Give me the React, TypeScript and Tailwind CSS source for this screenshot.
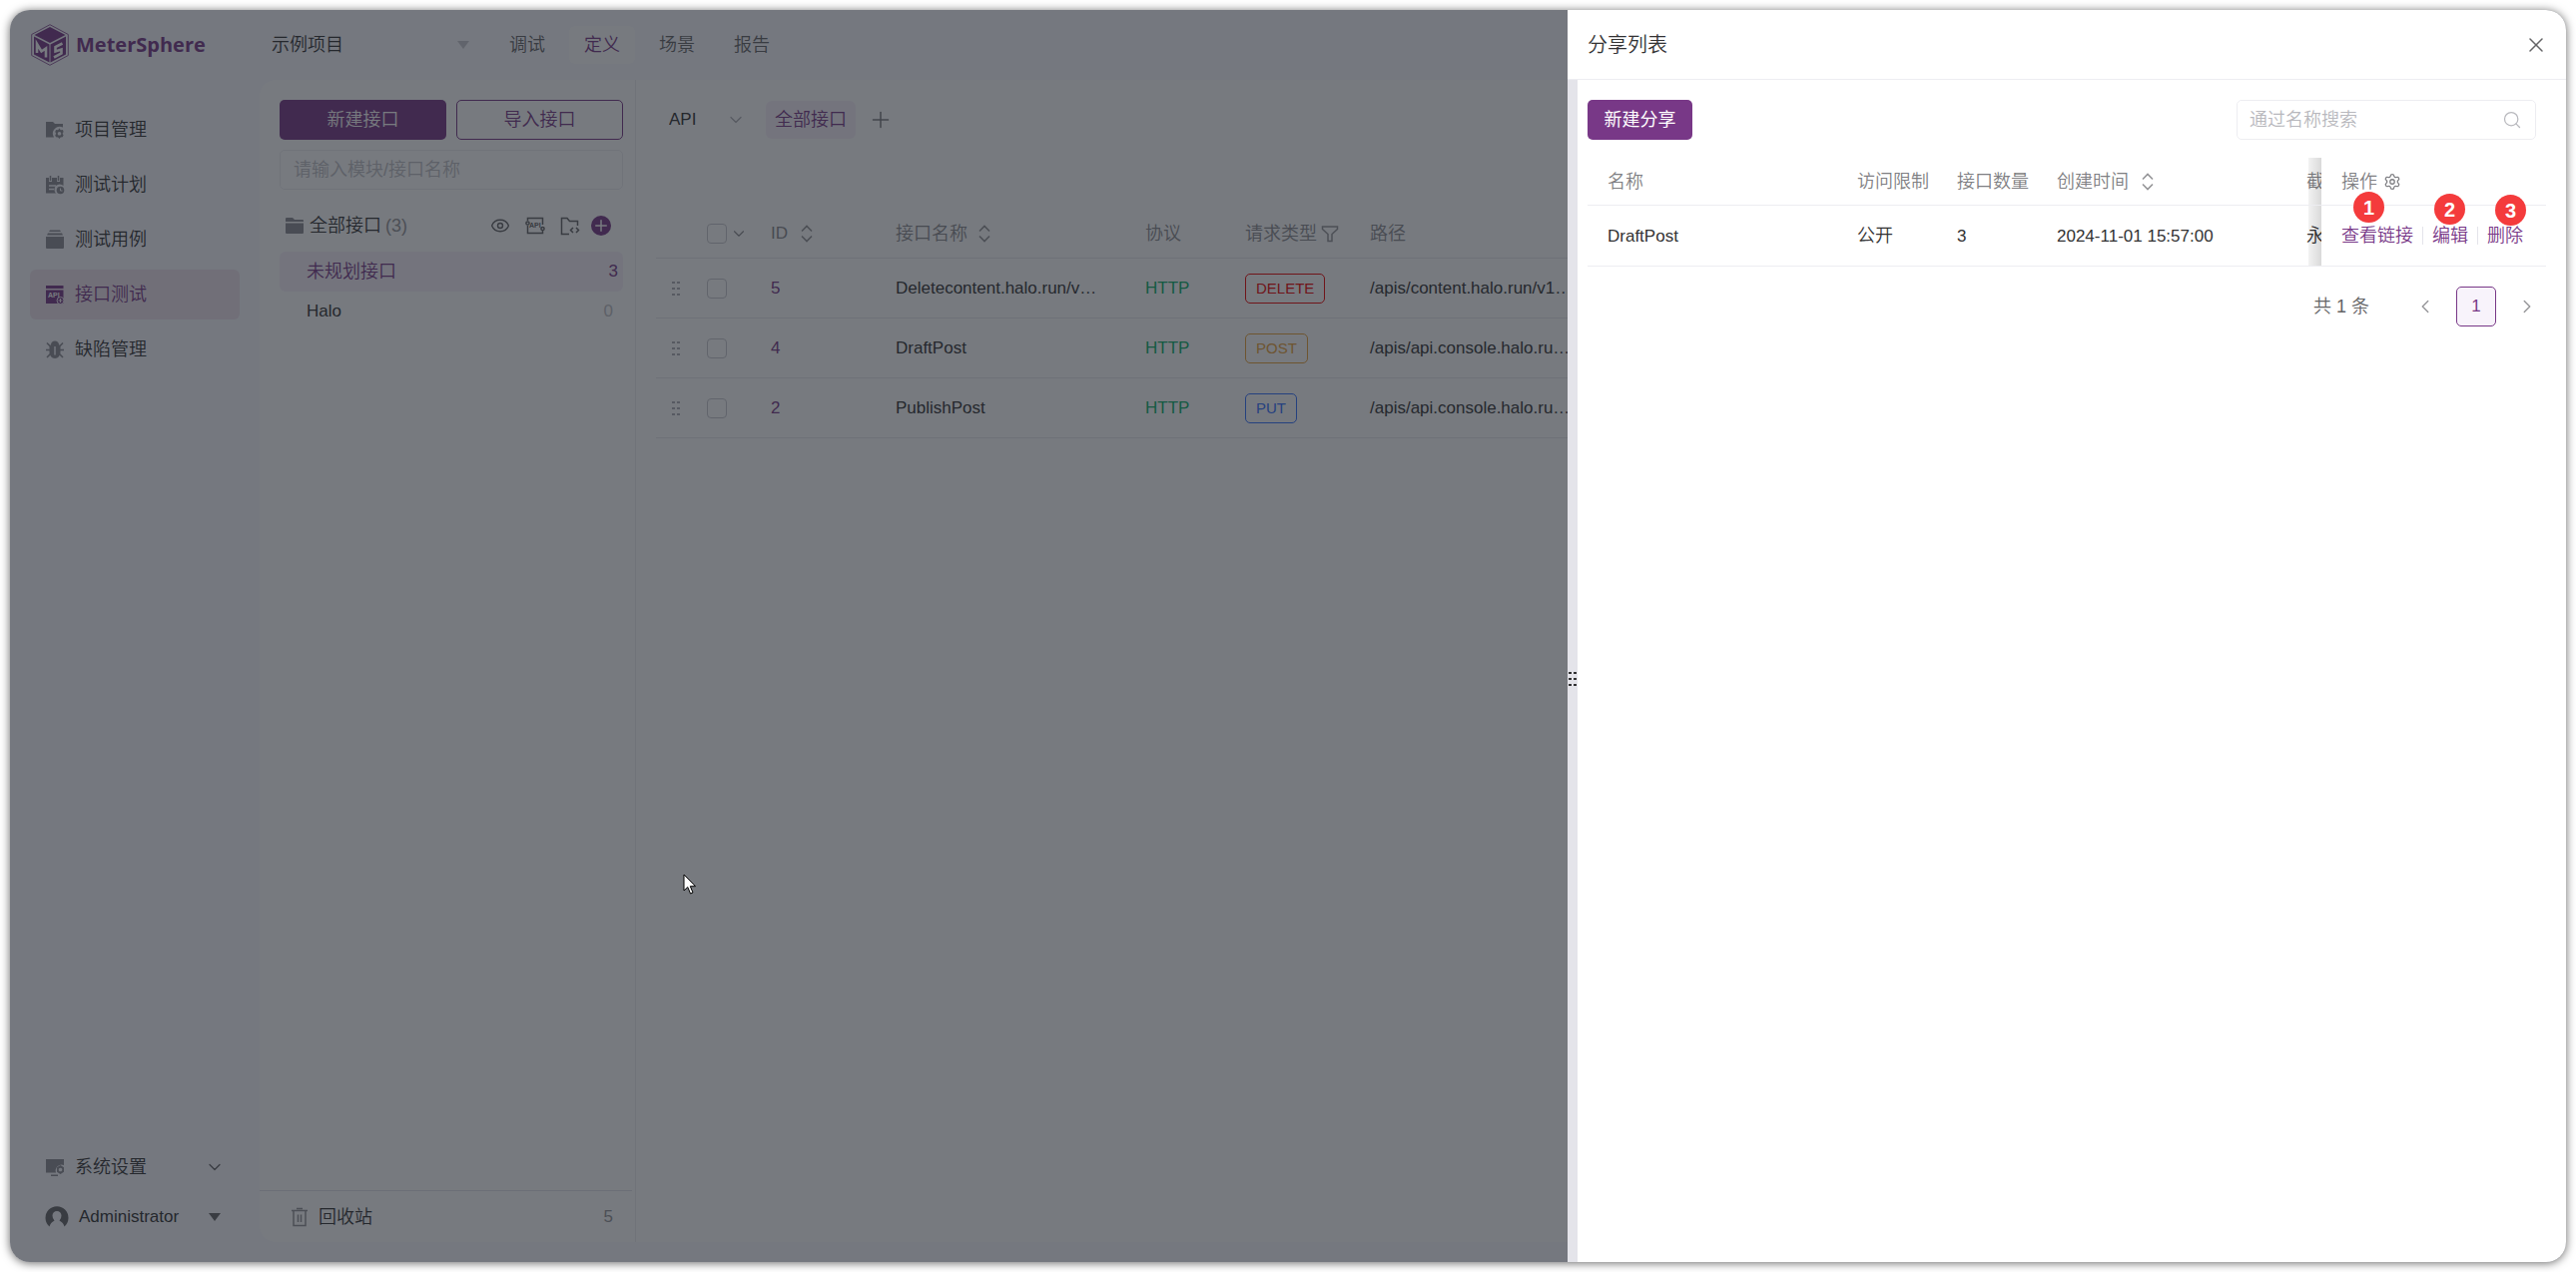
import React from 'react';
import { ChevronDown, ChevronLeft, ChevronRight, Eye, Plus, Search, Settings, X } from 'lucide-react';

type IconProps = { className?: string };

const MeterLogo = () => (
  <svg width="38" height="42" viewBox="0 0 38 42" aria-hidden="true">
    <path d="M19 .7 L37.300 10.500 V31.500 L19 41.300 L.7 31.500 V10.500 Z" fill="none" stroke="#783887" strokeWidth=".8" />
    <path d="M19 3 L34.500 11 L19 19 L3.500 11 Z" fill="#783887" />
    <path d="M3 12.500 L18.500 20.500 V38.500 L3 30.500 Z" fill="#783887" />
    <path d="M35 12.500 L19.500 20.500 V38.500 L35 30.500 Z" fill="#783887" />
    <path d="M6 29 V20 L10.500 27.500 L15 24.500 V33.500" fill="none" stroke="#fff" strokeWidth="2.600" />
    <path d="M31.500 19.500 L24.500 23 V27.500 L30.500 25.500 V29.500 L23 33.500" fill="none" stroke="#fff" strokeWidth="2.600" />
  </svg>
);

const ProjectIcon = ({ className }: IconProps) => (
  <svg className={className} width="20" height="20" viewBox="0 0 20 20" fill="currentColor" aria-hidden="true">
    <path d="M1 2 H8 L10 4 H18 V7.500 A7 7 0 0 0 9 17.500 H1 Z" />
    <path fillRule="evenodd" d="M14.500 8.500 l1.300 1.700 2.100-.1.700 2-1 1.600 1 1.800-.9 1.800-2 .1-1.200 1.600-1.400-1.600-2-.1-.9-1.800 1-1.800-1-1.600.9-2 2 .1Z M14.500 12 a1.800 1.800 0 1 0 .01 0Z" />
  </svg>
);

const PlanIcon = ({ className }: IconProps) => (
  <svg className={className} width="20" height="20" viewBox="0 0 20 20" aria-hidden="true">
    <path d="M1 3 H4 V7 H7 V3 H12 V7 H15 V3 H18.500 V11 A5 5 0 0 0 11 18.500 H1 Z" fill="currentColor" />
    <path d="M5.500 1 V6 M13.500 1 V6" stroke="currentColor" strokeWidth="1.500" />
    <path d="M4 11 H11 M4 14.500 H9" stroke="#f9f9fe" strokeWidth="1.500" />
    <circle cx="15.500" cy="15.500" r="3.800" fill="currentColor" />
    <path d="M15.500 13.500 V16 H17.500" stroke="#f9f9fe" fill="none" />
  </svg>
);

const CaseIcon = ({ className }: IconProps) => (
  <svg className={className} width="20" height="20" viewBox="0 0 20 20" fill="currentColor" aria-hidden="true">
    <path d="M5 .5 H15 L16 2 H4 Z M3 3.500 H17 L18 5.500 H2 Z M1 7 H19 V18 Q19 19 18 19 H2 Q1 19 1 18 Z" />
  </svg>
);

const ApiTestIcon = ({ className }: IconProps) => (
  <svg className={className} width="20" height="20" viewBox="0 0 20 20" aria-hidden="true">
    <path d="M1 1 H18.500 V4 H1 Z M1 5.500 H18.500 V19 H1 Z" fill="currentColor" />
    <text x="3" y="13" fontSize="7" fontWeight="bold" fontFamily="Liberation Sans, sans-serif" fill="#fff">API</text>
    <circle cx="15.500" cy="16" r="3.500" fill="currentColor" stroke="#f4edf6" />
    <path d="M15.500 14 V18 M13.500 16 H17.500" stroke="#f4edf6" />
  </svg>
);

const BugIcon = ({ className }: IconProps) => (
  <svg className={className} width="20" height="20" viewBox="0 0 20 20" fill="none" stroke="currentColor" aria-hidden="true">
    <path d="M1 10.500 H19 M2 3.500 L5.500 7 M18 3.500 L14.500 7 M2 18 L5.500 14.500 M18 18 L14.500 14.500" strokeWidth="1.600" />
    <path d="M6 5 Q6.500 1.500 10 1.500 Q13.500 1.500 14 5 L15.500 7 V13 Q15 18.500 10 19 Q5 18.500 4.500 13 V7 Z" fill="currentColor" stroke="none" />
    <path d="M10 7 V15.500" stroke="#f9f9fe" strokeWidth="1.500" />
  </svg>
);

const SystemIcon = ({ className }: IconProps) => (
  <svg className={className} width="20" height="20" viewBox="0 0 20 20" fill="currentColor" aria-hidden="true">
    <path d="M1 2 H19 V8 A6 6 0 0 0 11 15.500 H1 Z M6 17.500 H13 V19 H6 Z" />
    <path fillRule="evenodd" d="M15.500 8 l3.500 2.200 v4.500 l-3.500 2.300 -3.500-2.300 v-4.500 Z M15.500 10.700 a1.800 1.800 0 1 0 .01 0Z" />
  </svg>
);

const AvatarIcon = ({ className }: IconProps) => (
  <svg className={className} width="24" height="24" viewBox="0 0 24 24" aria-hidden="true">
    <path fillRule="evenodd" fill="currentColor" d="M4.500 21.500 A11.500 11.500 0 1 1 19.500 21.500 Q18.500 17.500 14.500 15.500 Q16.500 13.500 16.500 10.500 A4.500 4.500 0 0 0 7.500 10.500 Q7.500 13.500 9.500 15.500 Q5.500 17.500 4.500 21.500 Z" />
  </svg>
);

const FolderIcon = ({ className }: IconProps) => (
  <svg className={className} width="20" height="18" viewBox="0 0 20 18" fill="currentColor" aria-hidden="true">
    <path d="M1 2 Q1 1 2 1 H8 L10 3 H18 Q19 3 19 4 V5 H1 Z M1 6.500 H19 V16 Q19 17 18 17 H2 Q1 17 1 16 Z" />
  </svg>
);

const ApiIcon = () => (
  <svg width="20" height="18" viewBox="0 0 20 18" fill="none" stroke="#646466" strokeWidth="1.500" aria-hidden="true">
    <path d="M2.500 4 V1.500 H17.500 V8 M2.500 9 V16.500 H17.500 V14" />
    <circle cx="2.500" cy="6.500" r="1.600" />
    <circle cx="17.500" cy="12" r="1.600" />
    <text x="4" y="11" fontSize="7" fontWeight="bold" fontFamily="Liberation Sans, sans-serif" fill="#646466" stroke="none">API</text>
  </svg>
);

const FolderCodeIcon = () => (
  <svg width="20" height="19" viewBox="0 0 20 19" fill="none" stroke="#646466" strokeWidth="1.500" aria-hidden="true">
    <path d="M9 17.500 H1.500 V1.500 H7 L9.500 4.500 H17.500 V9" />
    <path d="M13 11 L10.500 13.500 L13 16 M16 11 L18.500 13.500 L16 16" />
  </svg>
);

const TrashIcon = () => (
  <svg width="18" height="20" viewBox="0 0 18 20" fill="none" stroke="#959598" strokeWidth="1.500" aria-hidden="true">
    <path d="M1 3.500 H17 M6 1.500 H12 M3 4 V18.500 H15 V4 M7.500 7.500 V15 M10.500 7.500 V15" />
  </svg>
);

const FilterIcon = () => (
  <svg width="18" height="18" viewBox="0 0 18 18" fill="none" stroke="#959598" strokeWidth="1.500" aria-hidden="true">
    <path d="M1.500 2 H16.500 V4.500 L11 9.500 V16.500 H7 V9.500 L1.500 4.500 Z" />
  </svg>
);

const SortIcon = () => (
  <svg width="14" height="18" viewBox="0 0 14 18" fill="none" stroke="#959598" strokeWidth="1.600" aria-hidden="true">
    <path d="M2 6.500 L7 1.500 L12 6.500 M2 11.500 L7 16.500 L12 11.500" />
  </svg>
);

const DragDots = ({ className }: IconProps) => (
  <svg className={className} width="10" height="16" viewBox="0 0 10 16" fill="currentColor" aria-hidden="true">
    <path d="M1 1h3v2H1z M6 1h3v2H6z M1 7h3v2H1z M6 7h3v2H6z M1 13h3v2H1z M6 13h3v2H6z" />
  </svg>
);

const Caret = ({ className }: IconProps) => (
  <svg className={className} width="12" height="8" viewBox="0 0 12 8" fill="currentColor" aria-hidden="true">
    <path d="M0 0 H12 L6 8 Z" />
  </svg>
);

const navItems = [
  { label: '项目管理', icon: ProjectIcon },
  { label: '测试计划', icon: PlanIcon },
  { label: '测试用例', icon: CaseIcon },
  { label: '接口测试', icon: ApiTestIcon, active: true },
  { label: '缺陷管理', icon: BugIcon },
];

const topTabs = ['调试', '定义', '场景', '报告'];

const apis = [
  { id: '5', name: 'Deletecontent.halo.run/v…', method: 'DELETE', color: 'border-[#ed0303] text-[#ed0303]', path: '/apis/content.halo.run/v1…' },
  { id: '4', name: 'DraftPost', method: 'POST', color: 'border-[#e9a23b] text-[#e9a23b]', path: '/apis/api.console.halo.ru…' },
  { id: '2', name: 'PublishPost', method: 'PUT', color: 'border-[#3370ff] text-[#3370ff]', path: '/apis/api.console.halo.ru…' },
];

const actions = [
  { label: '查看链接', step: 1, place: 'left-[12px] -top-[32px]' },
  { label: '编辑', step: 2, place: 'left-[2px] -top-[30px]' },
  { label: '删除', step: 3, place: 'left-[8px] -top-[29px]' },
];

const checkbox = 'block size-5 shrink-0 appearance-none rounded-sm border border-[#c9c9d0] bg-white';

// Edge shadow that the fixed column casts on the cells to its left
const FixedShadow = () => (
  <div className="absolute inset-y-0 -left-[13px] w-[13px] bg-linear-to-r from-black/5 to-black/15" />
);

function TopBar() {
  return (
    <header className="flex h-[70px] shrink-0 items-center">
      <div className="flex w-[250px] items-center gap-[7px] pl-[21px]">
        <MeterLogo />
        <span className="font-['Open_Sans',sans-serif] text-xl font-bold text-[#783887]">MeterSphere</span>
      </div>
      <label className="flex w-[210px] items-center justify-between pl-3">
        <select aria-label="项目" className="appearance-none bg-transparent text-[#323233]">
          <option>示例项目</option>
        </select>
        <Caret className="text-[#c9c9d0]" />
      </label>
      <nav className="ml-[25px] flex gap-[9px]">
        {topTabs.map((tab) => (
          <a
            key={tab}
            href="#"
            className={`flex h-[38px] items-center rounded-md px-[15px] ${tab === '定义' ? 'bg-white text-[#783887]' : 'text-[#646466]'}`}
          >
            {tab}
          </a>
        ))}
      </nav>
    </header>
  );
}

function Sidebar() {
  return (
    <aside className="flex w-[250px] shrink-0 flex-col justify-between px-5 pt-[25px] text-[#323233]">
      <nav className="flex flex-col gap-[5px]">
        {navItems.map((item) => (
          <a
            key={item.label}
            href="#"
            className={`flex h-[50px] items-center gap-[10px] rounded-md px-[15px] ${item.active ? 'bg-[#f0e3ee] text-[#783887]' : ''}`}
          >
            <item.icon className={item.active ? 'text-[#783887]' : 'text-[#8d8d94]'} />
            {item.label}
          </a>
        ))}
      </nav>
      <div>
        <button className="flex h-[50px] w-full items-center gap-[10px] px-[15px]">
          <SystemIcon className="text-[#8d8d94]" />
          系统设置
          <ChevronDown size={20} strokeWidth={1.5} className="ml-auto text-[#646466]" />
        </button>
        <button className="flex h-[50px] w-full items-center gap-[10px] px-[15px] text-[17px]">
          <AvatarIcon className="text-[#646466]" />
          Administrator
          <Caret className="mr-1 ml-auto text-[#646466]" />
        </button>
      </div>
    </aside>
  );
}

function ModuleTree() {
  return (
    <section className="flex w-[377px] shrink-0 flex-col border-r border-[#ededf1]">
      <div className="flex-1 px-5 pt-5 pr-3">
        <div className="grid grid-cols-2 gap-[10px]">
          <button className="h-10 rounded-[5px] bg-[#783887] text-white">新建接口</button>
          <button className="h-10 rounded-[5px] border border-[#783887] text-[#783887]">导入接口</button>
        </div>
        <input
          aria-label="模块/接口名称"
          placeholder="请输入模块/接口名称"
          className="mt-[10px] h-10 w-full rounded-[5px] border border-[#ededf1] px-[13px] placeholder:text-[#c0c0c5]"
        />
        <div className="mt-4 flex h-10 items-center pl-[5px] text-[#323233]">
          <FolderIcon className="mr-[5px] text-[#8d8d94]" />
          全部接口
          <span className="ml-1 text-[#959598]">(3)</span>
          <div className="mr-3 ml-auto flex items-center gap-[15px]">
            <button aria-label="查看"><Eye size={20} strokeWidth={1.7} className="text-[#646466]" /></button>
            <button aria-label="接口"><ApiIcon /></button>
            <button aria-label="模块"><FolderCodeIcon /></button>
            <button aria-label="新增" className="-ml-1 flex size-5 items-center justify-center rounded-full bg-[#783887] text-white">
              <Plus size={18} strokeWidth={2} />
            </button>
          </div>
        </div>
        <ul className="mt-[6px]">
          <li className="flex h-10 items-center justify-between rounded-md bg-[#f7f1fb] pr-[5px] pl-[27px] text-[#783887]">
            未规划接口 <span className="text-[17px]">3</span>
          </li>
          <li className="flex h-10 items-center justify-between pr-[10px] pl-[27px] text-[17px] text-[#323233]">
            Halo <span className="text-[#c0c0c5]">0</span>
          </li>
        </ul>
      </div>
      <div className="mr-[3px] flex h-[52px] items-center border-t border-[#e4e4ea] pr-[19px] pl-[31px] text-[#323233]">
        <TrashIcon />
        <span className="ml-[10px]">回收站</span>
        <span className="ml-auto text-[17px] text-[#959598]">5</span>
      </div>
    </section>
  );
}

function ApiPanel() {
  return (
    <main className="min-w-0 flex-1 overflow-hidden pt-5 pl-5">
      <div className="flex h-10 items-center">
        <label className="flex w-[90px] items-center justify-between pl-[13px]">
          <select aria-label="协议" className="appearance-none bg-transparent text-[17px] text-[#323233]">
            <option>API</option>
          </select>
          <ChevronDown size={20} strokeWidth={1.5} className="text-[#b0b0b6]" />
        </label>
        <button className="ml-5 h-[38px] rounded-md bg-[#f7f1fb] px-[9px] text-[#783887]">全部接口</button>
        <button aria-label="新增标签" className="ml-3"><Plus size={26} strokeWidth={1.4} className="text-[#7c7c80]" /></button>
      </div>

      <table className="mt-[70px] w-[1800px] table-fixed border-separate border-spacing-0 text-left whitespace-nowrap">
        <colgroup>
          <col className="w-[35px]" />
          <col className="w-[60px]" />
          <col className="w-[125px]" />
          <col className="w-[250px]" />
          <col className="w-[100px]" />
          <col className="w-[125px]" />
          <col />
        </colgroup>
        <thead>
          <tr className="h-[49px] text-[#8b8b8f] *:border-b *:border-[#e8e8ee] *:p-0 *:font-[350]">
            <th />
            <th>
              <div className="flex items-center gap-[3px] pl-4">
                <input type="checkbox" aria-label="全选" className={checkbox} />
                <ChevronDown size={18} strokeWidth={1.5} className="shrink-0" />
              </div>
            </th>
            <th><div className="flex items-center gap-3 pl-5"><span className="text-[17px]">ID</span><SortIcon /></div></th>
            <th><div className="flex items-center gap-[10px] pl-5">接口名称<SortIcon /></div></th>
            <th><div className="pl-5">协议</div></th>
            <th><div className="flex items-center gap-1 pl-5">请求类型<FilterIcon /></div></th>
            <th><div className="pl-5">路径</div></th>
          </tr>
        </thead>
        <tbody className="text-[17px] text-[#323233]">
          {apis.map((api) => (
            <tr key={api.id} className="h-[60px] *:border-b *:border-[#e8e8ee] *:p-0">
              <td><DragDots className="ml-[15px] text-[#b0b0b6]" /></td>
              <td><input type="checkbox" aria-label={api.name} className={`ml-4 ${checkbox}`} /></td>
              <td><a href="#" className="pl-5 text-[#783887]">{api.id}</a></td>
              <td><span className="pl-5">{api.name}</span></td>
              <td><span className="pl-5 text-[#0ab069]">HTTP</span></td>
              <td>
                <span className={`ml-5 inline-flex h-[30px] items-center rounded-[5px] border px-[10px] text-[15px] ${api.color}`}>{api.method}</span>
              </td>
              <td><span className="pl-5">{api.path}</span></td>
            </tr>
          ))}
        </tbody>
      </table>
    </main>
  );
}

function ShareDrawer() {
  return (
    <div role="dialog" aria-label="分享列表" className="absolute inset-y-0 right-0 flex w-[1000px] flex-col bg-white text-[#323233]">
      <div className="flex h-[70px] shrink-0 items-center justify-between border-b border-[#ededf1] pr-[18px] pl-5">
        <h2 className="text-xl font-[350]">分享列表</h2>
        <button aria-label="关闭"><X size={24} strokeWidth={1.5} className="block text-[#646466]" /></button>
      </div>

      <div className="flex min-h-0 flex-1">
        <div className="flex w-[10px] shrink-0 items-center justify-center bg-[#e4e4ea] pt-4">
          <DragDots className="text-[#323233]" />
        </div>
        <div className="min-w-0 flex-1 pt-5 pr-5 pl-[10px]">
          <div className="flex items-center justify-between pr-[10px]">
            <button className="h-10 w-[105px] rounded-[5px] bg-[#783887] font-normal text-white">新建分享</button>
            <label className="flex h-10 w-[300px] items-center rounded-[5px] border border-[#ededf1] pr-[13px] pl-3">
              <input aria-label="搜索" placeholder="通过名称搜索" className="min-w-0 flex-1 placeholder:text-[#b8b8bd]" />
              <Search size={20} strokeWidth={1.5} className="text-[#b8b8bd]" />
            </label>
          </div>

          <table className="mt-[18px] w-full table-fixed border-separate border-spacing-0 text-left whitespace-nowrap">
            <colgroup>
              <col className="w-[250px]" />
              <col className="w-[100px]" />
              <col className="w-[100px]" />
              <col className="w-[250px]" />
              <col />
              <col className="w-[225px]" />
            </colgroup>
            <thead>
              <tr className="h-12 text-[#7f7f83] *:border-b *:border-[#ededf1] *:p-0 *:font-[350]">
                <th><div className="pl-5">名称</div></th>
                <th><div className="pl-5">访问限制</div></th>
                <th><div className="pl-5">接口数量</div></th>
                <th><div className="flex items-center gap-3 pl-5">创建时间<SortIcon /></div></th>
                <th><div className="ml-5 overflow-hidden">截</div></th>
                <th className="relative">
                  <FixedShadow />
                  <div className="flex items-center gap-[6px] pl-5">
                    操作
                    <Settings size={18} strokeWidth={1.7} />
                  </div>
                </th>
              </tr>
            </thead>
            <tbody>
              <tr className="h-[61px] *:border-b *:border-[#ededf1] *:p-0">
                <td><span className="pl-5 text-[17px]">DraftPost</span></td>
                <td><span className="pl-5">公开</span></td>
                <td><span className="pl-5 text-[17px]">3</span></td>
                <td><span className="pl-5 text-[17px]">2024-11-01 15:57:00</span></td>
                <td><div className="ml-5 overflow-hidden">永</div></td>
                <td className="relative">
                  <FixedShadow />
                  <div className="flex items-center pl-5">
                    {actions.map((action, idx) => (
                      <React.Fragment key={action.label}>
                        {idx > 0 && <span className="mx-[9px] h-[18px] w-px bg-[#e4e4ea]" />}
                        <span className="relative">
                          <button className="block text-[#783887]">{action.label}</button>
                          <span className={`absolute flex size-[31px] items-center justify-center rounded-full bg-[#f43b3c] text-xl font-bold text-white ${action.place}`}>
                            {action.step}
                          </span>
                        </span>
                      </React.Fragment>
                    ))}
                  </div>
                </td>
              </tr>
            </tbody>
          </table>

          <div className="mt-5 flex items-center justify-end text-[#646466]">
            <span>共 1 条</span>
            <button aria-label="上一页" className="ml-[45px]"><ChevronLeft size={22} strokeWidth={1.5} className="text-[#959598]" /></button>
            <button aria-current="page" className="mx-[20px] size-10 rounded-[5px] border border-[#783887] bg-[#f8f3fb] text-[17px] text-[#783887]">1</button>
            <button aria-label="下一页" className="mr-2"><ChevronRight size={22} strokeWidth={1.5} className="text-[#959598]" /></button>
          </div>
        </div>
      </div>
    </div>
  );
}

export default function App() {
  return (
    <div className="h-screen bg-white p-[10px] font-['Liberation_Sans','Noto_Sans_CJK_SC',sans-serif] text-[18px] leading-6 font-[350]">
      <div className="relative flex h-full flex-col overflow-hidden rounded-[20px] bg-[#f9f9fe] shadow-[0_1px_10px_rgba(0,0,0,0.6)]">
        <TopBar />
        <div className="flex min-h-0 flex-1 pb-5">
          <Sidebar />
          <div className="flex min-w-0 flex-1 overflow-hidden rounded-l-2xl bg-white">
            <ModuleTree />
            <ApiPanel />
          </div>
        </div>
        <div className="absolute inset-0 bg-[#1d2129]/60" />
        <ShareDrawer />
        <svg className="absolute top-[865px] left-[674px]" width="14" height="22" viewBox="0 0 14 22" aria-hidden="true">
          <path d="M1 1 V17 L4.800 13.500 L7.500 20 L10 19 L7.300 12.700 H12.500 Z" fill="#fff" stroke="#000" />
        </svg>
      </div>
    </div>
  );
}
